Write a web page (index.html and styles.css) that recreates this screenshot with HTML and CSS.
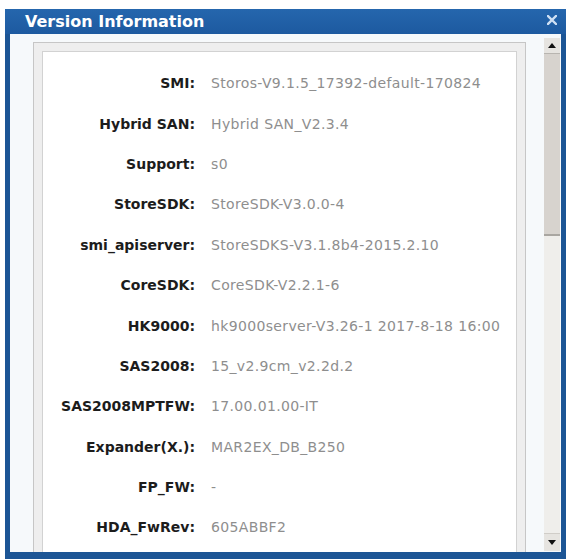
FILE: index.html
```html
<!DOCTYPE html>
<html lang="en">
<head>
<meta charset="utf-8">
<title>Version Information</title>
<link rel="stylesheet" href="styles.css">
</head>
<body>
<div class="window">
  <div class="titlebar">
    <span class="title">Version Information</span>
    <span class="close" aria-label="Close">
      <svg width="10" height="10" viewBox="0 0 10 10"><path d="M1 1 L9 9 M9 1 L1 9" stroke="#cfe0f4" stroke-width="2.4" stroke-linecap="square"/></svg>
    </span>
  </div>
  <div class="body">
    <div class="panel">
      <div class="panel-inner">
        <dl class="info">
          <dt>SMI:</dt><dd>Storos-V9.1.5_17392-default-170824</dd>
          <dt>Hybrid SAN:</dt><dd>Hybrid SAN_V2.3.4</dd>
          <dt>Support:</dt><dd>s0</dd>
          <dt>StoreSDK:</dt><dd>StoreSDK-V3.0.0-4</dd>
          <dt>smi_apiserver:</dt><dd>StoreSDKS-V3.1.8b4-2015.2.10</dd>
          <dt>CoreSDK:</dt><dd>CoreSDK-V2.2.1-6</dd>
          <dt>HK9000:</dt><dd>hk9000server-V3.26-1 2017-8-18 16:00</dd>
          <dt>SAS2008:</dt><dd>15_v2.9cm_v2.2d.2</dd>
          <dt>SAS2008MPTFW:</dt><dd>17.00.01.00-IT</dd>
          <dt>Expander(X.):</dt><dd>MAR2EX_DB_B250</dd>
          <dt>FP_FW:</dt><dd>-</dd>
          <dt>HDA_FwRev:</dt><dd>605ABBF2</dd>
        </dl>
      </div>
    </div>
    <div class="scrollbar">
      <div class="sb-btn"><span class="arrow-up"></span></div>
      <div class="sb-thumb"></div>
      <div class="sb-track"></div>
      <div class="sb-btn"><span class="arrow-down"></span></div>
    </div>
  </div>
</div>
</body>
</html>
```
FILE: styles.css
```css
html, body {
  margin: 0;
  padding: 0;
  background: #ffffff;
}

body {
  font-family: "DejaVu Sans", Verdana, sans-serif;
}

.window {
  margin: 9px 0 0 5px;
  width: 561px;
  height: 550px;
  background: #1c5595;
  display: flex;
  flex-direction: column;
  overflow: hidden;
}

.titlebar {
  height: 25px;
  flex: none;
  display: flex;
  align-items: center;
  justify-content: space-between;
  padding: 0 9px 0 20px;
  background: linear-gradient(#2566ad, #1d5aa0);
}

.title {
  color: #ffffff;
  font-weight: bold;
  font-size: 16px;
  line-height: 25px;
}

.close {
  display: flex;
  align-items: center;
  margin-top: -4px;
}

.body {
  flex: 1;
  margin: 0 5px 7px 5px;
  background: #f6f9fb;
  display: flex;
  padding: 4px 1px 1px 0;
  overflow: hidden;
}

/* grey double-ruled frame around the version list */
.panel {
  flex: none;
  width: 493px;
  margin: 4px 18px 0 23px;
  box-sizing: border-box;
  border: 1px solid #c6c6c6;
  background: #eeeeee;
  padding: 8px;
  height: 560px;
}

.panel-inner {
  border: 1px solid #d2d2d2;
  background: #ffffff;
  height: 100%;
  box-sizing: border-box;
  padding-top: 11px;
}

.info {
  margin: 0;
  display: grid;
  grid-template-columns: 152px 1fr;
  column-gap: 16px;
  grid-auto-rows: 40.4px;
  align-items: center;
  font-size: 14px;
}

.info dt {
  text-align: right;
  font-weight: bold;
  color: #1c1c1c;
}

.info dd {
  margin: 0;
  color: #8e8e8e;
  letter-spacing: 0.35px;
  white-space: nowrap;
}

.scrollbar {
  flex: none;
  width: 16px;
  display: flex;
  flex-direction: column;
  background: #ecebe8;
}

.sb-btn {
  height: 15px;
  flex: none;
  display: flex;
  align-items: center;
  justify-content: center;
  background: #e6e4e0;
  border-bottom: 1px solid #b8b5b0;
}

.sb-btn:last-child {
  border-bottom: none;
  border-top: 1px solid #d0cdc8;
  height: 17px;
}

.arrow-up {
  width: 0;
  height: 0;
  border-left: 4px solid transparent;
  border-right: 4px solid transparent;
  border-bottom: 5px solid #111111;
}

.arrow-down {
  width: 0;
  height: 0;
  border-left: 4px solid transparent;
  border-right: 4px solid transparent;
  border-top: 5px solid #111111;
}

.sb-thumb {
  height: 182px;
  flex: none;
  background: #d7d3ce;
  border-bottom: 2px solid #a9a6a1;
  box-sizing: border-box;
}

.sb-track {
  flex: 1;
  background: #efeeeb;
}
```
